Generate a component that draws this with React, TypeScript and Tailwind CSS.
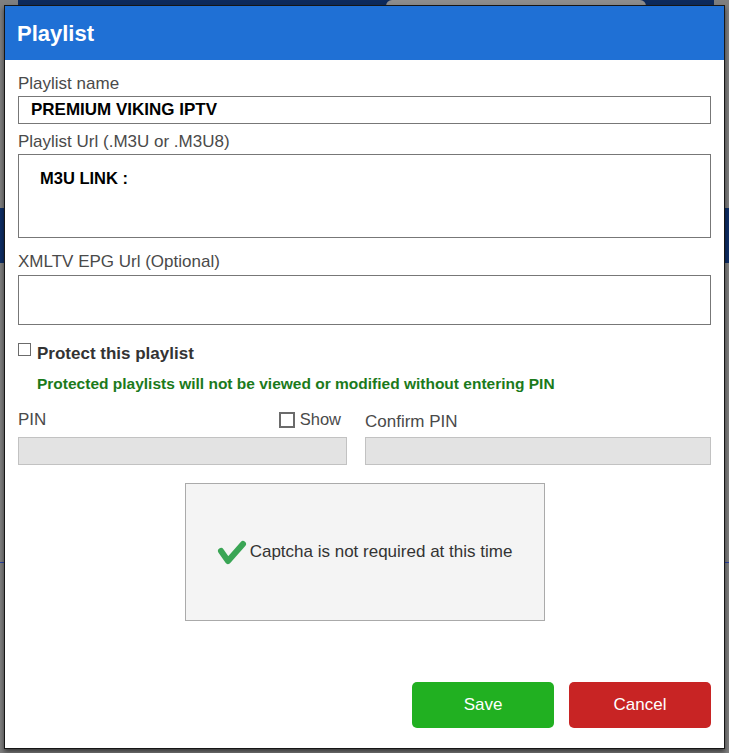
import React from 'react';

function CheckMark() {
  return (
    <svg width="30" height="25" viewBox="0 0 30 25" className="shrink-0">
      <polyline
        points="4,11 11,21 26,4"
        fill="none"
        stroke="#3aa555"
        strokeWidth="6"
        strokeLinecap="round"
        strokeLinejoin="round"
      />
    </svg>
  );
}

export default function App() {
  return (
    <div className="relative h-[753px] w-full overflow-hidden bg-[#7f7f7f] font-['Liberation_Sans',Arial,sans-serif]">
      {/* page behind the modal */}
      <div className="absolute left-[18px] top-0 h-[6px] w-[696px] bg-[#0d2a5c]" />
      <div className="absolute left-[386px] top-0 h-[6px] w-[260px] rounded-t-[6px] bg-[#8d8d8d]" />
      <div className="absolute left-0 top-[208px] h-[55px] w-full bg-[#0f2f66]" />
      <div className="absolute left-0 top-[562px] h-px w-full bg-[#2a44a8]" />

      <div className="relative px-[4px] pt-[5px]">
        <div className="border border-[#161616] bg-white shadow-[0_3px_5px_rgba(0,0,0,0.55)]">
          {/* Header */}
          <div className="flex h-[54px] items-center bg-[#1f70d5] px-[12px]">
            <h1 className="text-[22px] font-bold text-white">Playlist</h1>
          </div>

          <div className="px-[13px] pb-[20px] pt-[14px]">
            <label className="block text-[17px] leading-[20px] text-[#4a4a4a]">Playlist name</label>
            <input
              readOnly
              value="PREMIUM VIKING IPTV"
              className="mt-[2px] block h-[28px] w-full border border-[#777] px-[12px] text-[17px] font-bold text-black outline-none"
            />

            <label className="mt-[8px] block text-[17px] leading-[20px] text-[#4a4a4a]">
              Playlist Url (.M3U or .M3U8)
            </label>
            <textarea
              readOnly
              value="M3U LINK :"
              className="mt-[2px] block h-[84px] w-full resize-none border border-[#777] pl-[21px] pt-[13px] text-[16.5px] font-bold leading-[20px] text-black outline-none"
            />

            <label className="mt-[14px] block text-[17px] leading-[20px] text-[#4a4a4a]">
              XMLTV EPG Url (Optional)
            </label>
            <input readOnly className="mt-[3px] block h-[50px] w-full border border-[#777] px-[12px] outline-none" />

            {/* Protect */}
            <div className="mt-[19px] flex items-start">
              <span className="mt-[-1px] block h-[13px] w-[13px] border border-[#6b6b6b] bg-white" />
              <span className="ml-[6px] text-[17px] font-bold leading-[20px] text-[#333]">Protect this playlist</span>
            </div>
            <p className="mt-[10px] pl-[19px] text-[15.5px] font-bold leading-[20px] text-[#1b7a1b]">
              Protected playlists will not be viewed or modified without entering PIN
            </p>

            {/* PIN */}
            <div className="mt-[16px] grid grid-cols-[329px_1fr] gap-x-[18px]">
              <div>
                <div className="flex h-[20px] items-center justify-between pr-[6px]">
                  <span className="text-[17px] leading-[20px] text-[#4a4a4a]">PIN</span>
                  <span className="flex items-center">
                    <span className="block h-[16px] w-[16px] border-2 border-[#6b6b6b] bg-white" />
                    <span className="ml-[5px] -mt-[3px] text-[16.5px] leading-[20px] text-[#4a4a4a]">Show</span>
                  </span>
                </div>
                <input readOnly type="password" className="mt-[7px] block h-[28px] w-full border border-[#c2c2c2] bg-[#e3e3e3] outline-none" />
              </div>
              <div>
                <div className="flex h-[20px] items-center">
                  <span className="mt-[4px] text-[17px] leading-[20px] text-[#4a4a4a]">Confirm PIN</span>
                </div>
                <input readOnly type="password" className="mt-[7px] block h-[28px] w-full border border-[#c2c2c2] bg-[#e3e3e3] outline-none" />
              </div>
            </div>

            {/* Captcha */}
            <div className="mx-auto mt-[18px] flex h-[138px] w-[360px] items-center justify-center border border-[#aaa] bg-[#f4f4f4]">
              <CheckMark />
              <span className="ml-[3px] text-[17px] text-[#333]">Captcha is not required at this time</span>
            </div>

            {/* Actions */}
            <div className="mt-[61px] flex justify-end gap-[15px]">
              <button className="h-[46px] w-[142px] rounded-[5px] bg-[#21b021] text-[17px] text-white">Save</button>
              <button className="h-[46px] w-[142px] rounded-[5px] bg-[#c82424] text-[17px] text-white">Cancel</button>
            </div>
          </div>
        </div>
      </div>
    </div>
  );
}
